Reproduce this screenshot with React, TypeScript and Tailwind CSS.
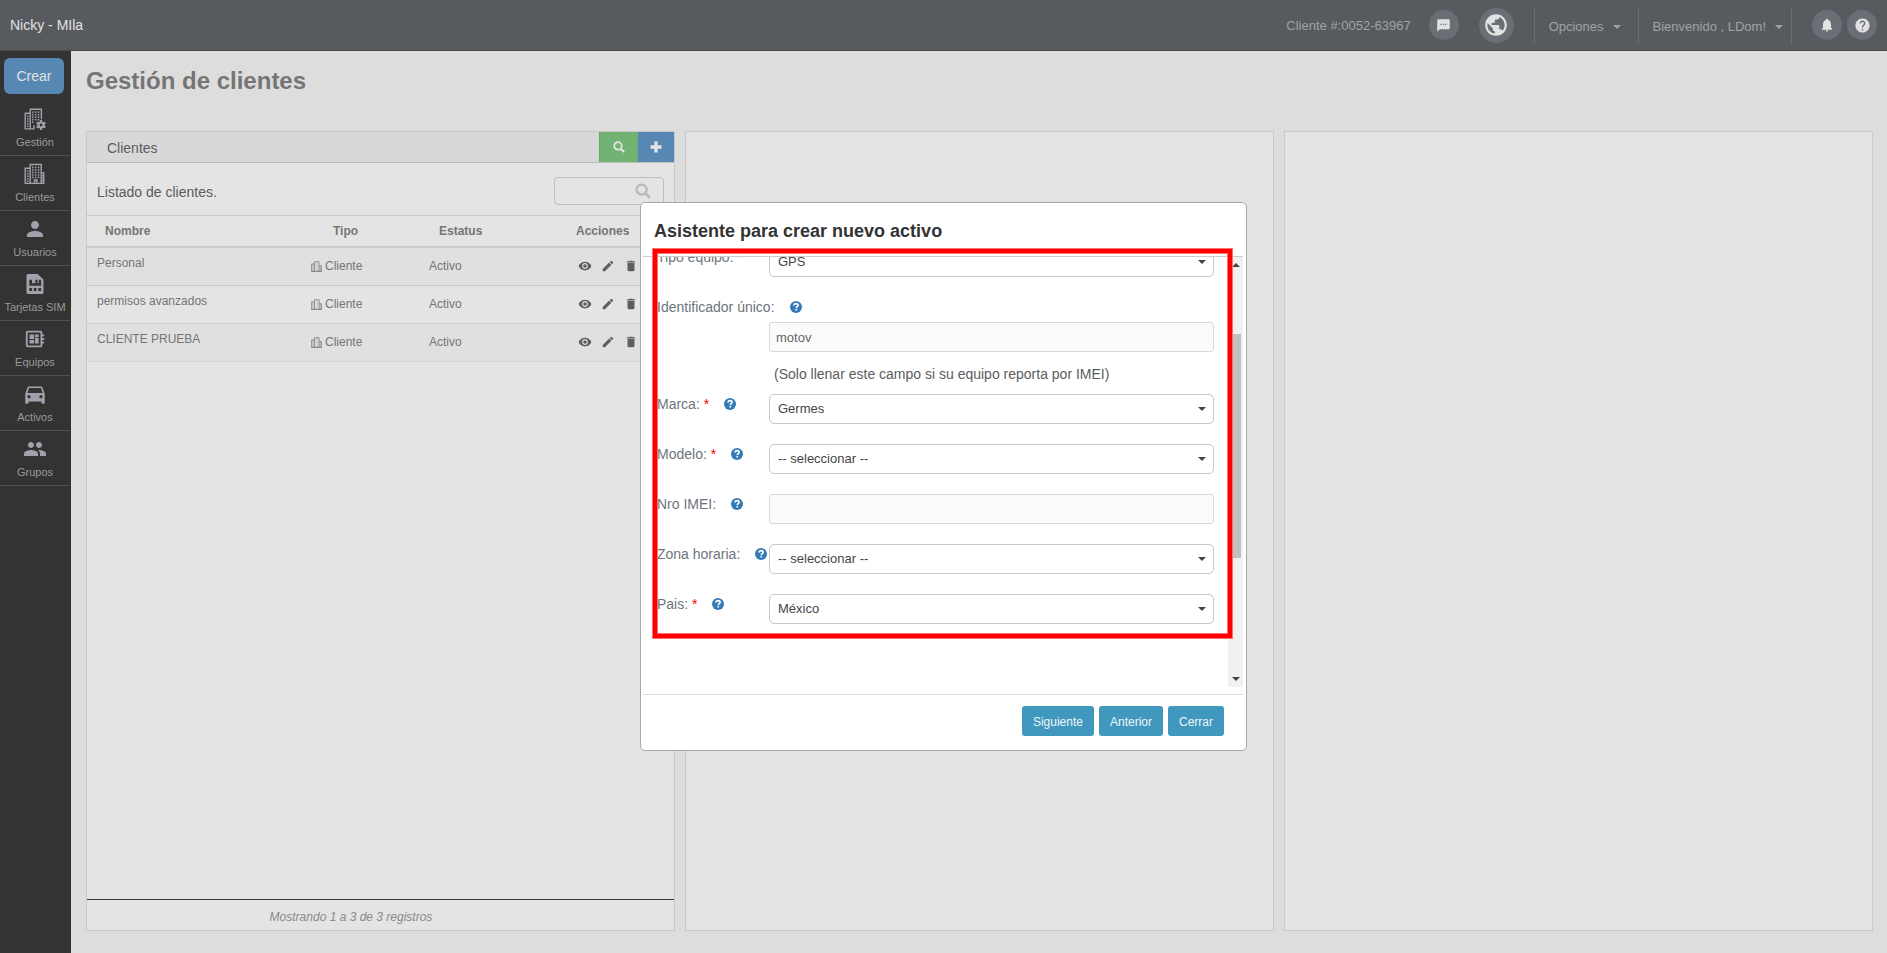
import type { ReactNode } from "react";
import {
  MdSms,
  MdPublic,
  MdNotifications,
  MdHelp,
  MdPerson,
  MdDeveloperBoard,
  MdDirectionsCar,
  MdGroup,
  MdVisibility,
  MdEdit,
  MdDelete,
} from "react-icons/md";

function Dots({ xs, ys }: { xs: number[]; ys: number[] }) {
  return (
    <>
      {xs.flatMap((x) =>
        ys.map((y) => <rect key={`${x}-${y}`} x={x} y={y} width="1.5" height="1.5" fill="currentColor" stroke="none" />),
      )}
    </>
  );
}

function BuildingIcon() {
  return (
    <svg viewBox="0 0 22 22" className="size-[22px]" fill="none" stroke="currentColor" strokeWidth="1.4">
      <path d="M6.2 20.4H1.2V5.2h5M6.2 20.4V1.5h11v18.9zM17.2 10h2.6v10.4h-2.6M10.5 20v-3h2.4v3" />
      <Dots xs={[3]} ys={[7.5, 10, 12.5, 15, 17.5]} />
      <Dots xs={[8, 10.9, 13.8]} ys={[3.7, 6.2, 8.7, 11.2, 13.7]} />
      <Dots xs={[17.8]} ys={[12, 14.5, 17]} />
    </svg>
  );
}

function BuildingGearIcon() {
  const teeth = [0, 60, 120, 180, 240, 300];
  return (
    <svg viewBox="0 0 22 22" className="size-[22px]" fill="none" stroke="currentColor" strokeWidth="1.4">
      <path d="M10.5 20.9H1.2V5.2h5M6.2 20.9V1.2h11.2v10M10 20.9v-3.6" />
      <Dots xs={[3]} ys={[7.5, 10, 12.5, 15, 17.5]} />
      <Dots xs={[8, 10.9, 13.8]} ys={[3.4, 5.9, 8.4, 10.9]} />
      <Dots xs={[8]} ys={[13.4]} />
      <circle cx="17" cy="17" r="2.5" strokeWidth="2.2" />
      {teeth.map((a) => (
        <path key={a} d="M17 13.9v-1.9" strokeWidth="2.2" transform={`rotate(${a} 17 17)`} />
      ))}
    </svg>
  );
}

function SmallBuildingIcon() {
  return (
    <svg viewBox="0 0 11 11" className="size-[11px]" fill="none" stroke="currentColor" strokeWidth="0.8" opacity="0.9">
      <path d="M3.5 10.400H.6V2.900h2.900M3.500 10.400V.7h4.600v9.700zM8.100 4.600h2.300v5.800H8.100" />
      <path d="M2 3v7.400M9.300 5v5.400" strokeWidth="1.200" opacity="0.45" />
      <path d="M5 1v9M6.600 1v9" strokeWidth="0.600" opacity="0.4" />
      <path d="M.2 10.400h10.600" />
    </svg>
  );
}

function SimIcon() {
  return (
    <svg viewBox="0 0 18 20" className="h-[20px] w-[18px]" fill="currentColor" fillRule="evenodd">
      <path d="M2 0h9.500L17.500 5.500V18.500a1.500 1.500 0 0 1-1.500 1.500H2A1.500 1.500 0 0 1 .5 18.500v-17A1.500 1.500 0 0 1 2 0zM3.300 5.800v6h11.800v-6h-2.300v3.400h-1.300V5.800H9.300v3.400H6V5.800zM3.300 14v3h2.700v-3zM7.700 14v3h2.700v-3zM12.300 14v3h2.800v-3z" />
    </svg>
  );
}

function SearchIcon({ className }: { className: string }) {
  return (
    <svg viewBox="0 0 16 16" className={className} fill="none" stroke="currentColor">
      <circle cx="6.600" cy="6.600" r="5" strokeWidth="2.400" />
      <path d="M10.300 10.300 14.800 14.800" strokeWidth="2.800" />
    </svg>
  );
}

function PlusIcon() {
  return (
    <svg viewBox="0 0 12 12" className="size-3" fill="currentColor">
      <path d="M4.300.5h3.400v3.800h3.800v3.400H7.700v3.800H4.300V7.700H.5V4.300h3.800z" />
    </svg>
  );
}

function QuestionIcon() {
  return (
    <svg viewBox="0 0 12 12" className="size-3 shrink-0" fill="none">
      <circle cx="6" cy="6" r="6" fill="#337ab7" />
      <path d="M4.100 4.600c0-1.300.8-2 2-2s2 .7 2 1.700c0 1.300-1.800 1.300-1.800 2.700" stroke="#fff" strokeWidth="1.700" />
      <path d="M5.400 7.900h1.700v1.600H5.400z" fill="#fff" />
    </svg>
  );
}

function Caret({ className }: { className: string }) {
  return (
    <svg viewBox="0 0 8 4" className={className} fill="currentColor">
      <path d="M0 0h8L4 4z" />
    </svg>
  );
}

const NAV: { label: string; icon: ReactNode }[] = [
  { label: "Gestión", icon: <BuildingGearIcon /> },
  { label: "Clientes", icon: <BuildingIcon /> },
  { label: "Usuarios", icon: <MdPerson className="size-6" /> },
  { label: "Tarjetas SIM", icon: <SimIcon /> },
  { label: "Equipos", icon: <MdDeveloperBoard className="size-[22px]" /> },
  { label: "Activos", icon: <MdDirectionsCar className="size-[26px]" /> },
  { label: "Grupos", icon: <MdGroup className="size-6" /> },
];

const CLIENTS = ["Personal", "permisos avanzados", "CLIENTE PRUEBA"];

function TopBar() {
  return (
    <header className="flex h-[51px] items-center justify-between border-b border-[#46494c] bg-[#575b5f] pr-[10px] pl-[10px] text-[#a0a2a4]">
      <span className="text-sm text-[#e2e2e2]">Nicky - MIla</span>
      <div className="flex items-center text-[13px]">
        <span className="mr-[18px] pt-px">Cliente #:0052-63967</span>
        <button aria-label="Mensajes" className="mr-5 flex size-[30px] items-center justify-center rounded-full bg-[#6a6f75] text-[#e2e2e2]">
          <MdSms className="size-[15px]" />
        </button>
        <button aria-label="Idioma" className="mr-5 flex size-[35px] items-center justify-center rounded-full bg-[#6a6f75] text-[#e2e2e2]">
          <MdPublic className="size-[26px]" />
        </button>
        <button className="flex h-[35px] items-center gap-[9px] border-l border-[#6c7074] pt-[3px] pr-[17px] pl-[14px]">
          Opciones <Caret className="h-1 w-2" />
        </button>
        <button className="mr-5 flex h-[35px] items-center gap-[9px] border-x border-[#6c7074] pt-[3px] pr-2 pl-[14px]">
          Bienvenido , LDom! <Caret className="h-1 w-2" />
        </button>
        <div className="flex gap-[5px] text-[#e2e2e2]">
          <button aria-label="Notificaciones" className="flex size-[30px] items-center justify-center rounded-full bg-[#6a6f75]">
            <MdNotifications className="size-4" />
          </button>
          <button aria-label="Ayuda" className="flex size-[30px] items-center justify-center rounded-full bg-[#6a6f75]">
            <MdHelp className="size-[17px]" />
          </button>
        </div>
      </div>
    </header>
  );
}

function Sidebar() {
  return (
    <nav className="w-[71px] shrink-0 bg-[#333] pt-[7px] pr-px text-[#a3a0ab]">
      <button className="mb-[7px] ml-1 h-9 w-[60px] rounded-md bg-[#5788b4] text-sm text-[#e0e0e0]">Crear</button>
      {NAV.map((item) => (
        <a key={item.label} href="#" className="flex h-[55px] flex-col items-center border-b border-[#495254] pt-[6px]">
          <span className="flex h-6 items-center">{item.icon}</span>
          <span className="mt-[3px] text-[11px] leading-4 whitespace-nowrap text-[#9a9a9a]">{item.label}</span>
        </a>
      ))}
    </nav>
  );
}

function ClientsPanel() {
  return (
    <section className="flex flex-col border border-[#c9c9c9] bg-[#e4e4e4]">
      <div className="flex h-[31px] border-b border-[#bdbdbd] bg-[#d8d8d8]">
        <h2 className="flex-1 pt-[6px] pl-5 text-sm leading-5 text-[#5c5c5c]">Clientes</h2>
        <button aria-label="Buscar" className="flex w-[39px] items-center justify-center border-l border-[#66a567] bg-[#72b273] text-[#e4e4e4]">
          <SearchIcon className="size-3" />
        </button>
        <button aria-label="Agregar" className="flex w-9 items-center justify-center bg-[#5788b4] text-[#e4e4e4]">
          <PlusIcon />
        </button>
      </div>
      <div className="flex h-[53px] items-center justify-between border-b border-[#c9c9c9] px-[10px] text-sm text-[#5c5c5c]">
        <label htmlFor="buscar-clientes" className="pt-[6px]">Listado de clientes.</label>
        <span className="relative mt-1">
          <input id="buscar-clientes" className="block h-7 w-[110px] rounded border border-[#bebebe] bg-transparent pr-7 pl-2" />
          <SearchIcon className="absolute top-[6px] right-[13px] size-4 text-[#bababa]" />
        </span>
      </div>
      <table className="w-full table-fixed border-collapse text-left text-xs text-[#757575]">
        <colgroup>
          <col className="w-[214px]" />
          <col className="w-[118px]" />
          <col className="w-[143px]" />
          <col />
        </colgroup>
        <thead>
          <tr className="h-[31px] border-b-2 border-[#cdcdcd]">
            <th className="pl-[18px]">Nombre</th>
            <th className="pl-8">Tipo</th>
            <th className="pl-5">Estatus</th>
            <th className="pl-[14px]">Acciones</th>
          </tr>
        </thead>
        <tbody>
          {CLIENTS.map((name) => (
            <tr key={name} className="h-[38px] border-b border-[#c9c9c9] odd:bg-[#e0e0e0] last:border-[#d8d8d8]">
              <td className="pt-[7px] pl-[10px] align-top">{name}</td>
              <td className="pl-[10px]">
                <span className="flex items-center gap-[3px]">
                  <SmallBuildingIcon /> Cliente
                </span>
              </td>
              <td className="pl-[10px]">Activo</td>
              <td className="pl-4">
                <span className="flex items-center gap-[9px] text-[#5e5e5e]">
                  <button aria-label={`Ver ${name}`}><MdVisibility className="size-[14px]" /></button>
                  <button aria-label={`Editar ${name}`}><MdEdit className="size-[14px]" /></button>
                  <button aria-label={`Eliminar ${name}`}><MdDelete className="size-[14px]" /></button>
                </span>
              </td>
            </tr>
          ))}
        </tbody>
      </table>
      <p className="mt-auto border-t border-[#333] pt-[9px] pr-[59px] pb-1 text-center text-xs leading-[17px] text-[#8a8a8a] italic">
        Mostrando 1 a 3 de 3 registros
      </p>
    </section>
  );
}

function FieldLabel({ id, text, required, help = true }: { id: string; text: string; required?: boolean; help?: boolean }) {
  return (
    <span className="flex h-5 w-28 shrink-0 items-center gap-[15px] text-sm leading-5 whitespace-nowrap text-[#6d747c]">
      <label htmlFor={id}>
        {text}
        {required && <span className="text-[#f00]"> *</span>}
      </label>
      {help && <QuestionIcon />}
    </span>
  );
}

function SelectField({ id, text, value, required, help }: { id: string; text: string; value: string; required?: boolean; help?: boolean }) {
  return (
    <div className="mb-5 flex">
      <FieldLabel id={id} text={text} required={required} help={help} />
      <span className="relative flex-1">
        <select id={id} className="block h-[30px] w-full appearance-none rounded-[5px] border border-[#c8c8c8] bg-white pl-2 text-[13px] text-[#444]">
          <option>{value}</option>
        </select>
        <Caret className="pointer-events-none absolute top-[13px] right-[8px] h-1 w-2 text-[#444]" />
      </span>
    </div>
  );
}

function AssetDialog() {
  return (
    <div className="fixed inset-0 flex items-center justify-center">
      <div role="dialog" aria-labelledby="dialog-title" className="relative w-[607px] rounded-[5px] border border-[#a8a8a8] bg-white pr-[3px] pl-[2px]">
        <h2 id="dialog-title" className="border-b border-[#ccc] pt-4 pb-[13px] pl-[11px] text-lg leading-6 font-bold text-[#333]">
          Asistente para crear nuevo activo
        </h2>
        <div className="mb-[7px] flex h-[430px]">
          <form className="-mt-[10px] min-w-0 flex-1 pr-[14px] pl-[14px] [clip-path:inset(10px_0_0_0)]">
            <SelectField id="tipo" text="Tipo equipo:" value="GPS" required help={false} />
            <FieldLabel id="identificador" text="Identificador único:" />
            <div className="mb-[10px] ml-28 pt-[5px]">
              <input id="identificador" defaultValue="motov" className="block h-[30px] w-full rounded-[3px] border border-[#dadada] bg-[#fbfbfb] px-[6px] text-[13px] text-[#666]" />
              <p className="mt-3 pl-[5px] text-sm leading-5 text-[#5c5c5c]">(Solo llenar este campo si su equipo reporta por IMEI)</p>
            </div>
            <SelectField id="marca" text="Marca:" value="Germes" required />
            <SelectField id="modelo" text="Modelo:" value="-- seleccionar --" required />
            <div className="mb-5 flex">
              <FieldLabel id="imei" text="Nro IMEI:" />
              <input id="imei" className="h-[30px] min-w-0 flex-1 rounded-[3px] border border-[#dadada] bg-[#fbfbfb] px-[6px] text-[13px] text-[#666]" />
            </div>
            <SelectField id="zona" text="Zona horaria:" value="-- seleccionar --" />
            <SelectField id="pais" text="Pais:" value="México" required />
          </form>
          <div className="flex w-[15px] flex-col items-center bg-[#f1f1f1] py-[6px] text-[#444]">
            <Caret className="h-1 w-2 rotate-180" />
            <div className="mt-[67px] h-[224px] w-[11px] bg-[#c1c1c1]" />
            <Caret className="mt-auto h-1 w-2" />
          </div>
        </div>
        <div className="flex justify-end gap-[5px] border-t border-[#dcdcdc] pt-[11px] pr-[19px] pb-[14px] text-xs text-[#eef6fa]">
          <button className="h-[30px] rounded-[3px] bg-[#4098be] px-[11px] pt-[2px]">Siguiente</button>
          <button className="h-[30px] rounded-[3px] bg-[#4098be] px-[11px] pt-[2px]">Anterior</button>
          <button className="h-[30px] rounded-[3px] bg-[#4098be] px-[11px] pt-[2px]">Cerrar</button>
        </div>
        <div className="pointer-events-none absolute top-[46px] right-[14px] bottom-[112px] left-[12px] border-4 border-[#f00] shadow-[0_0_0_1px_#ff7070] outline-1 -outline-offset-5 outline-[#ff7070]" />
      </div>
    </div>
  );
}

export default function App() {
  return (
    <div className="flex min-h-screen flex-col bg-[#ddd] font-['Liberation_Sans',Arial,sans-serif]">
      <TopBar />
      <div className="flex flex-1">
        <Sidebar />
        <main className="flex min-w-0 flex-1 flex-col pt-[14px] pr-[14px] pb-[22px] pl-[15px]">
          <h1 className="mb-[34px] text-2xl leading-8 font-bold text-[#757575]">Gestión de clientes</h1>
          <div className="grid flex-1 grid-cols-3 gap-[10px]">
            <ClientsPanel />
            <section className="border border-[#c9c9c9] bg-[#e4e4e4]" />
            <section className="border border-[#c9c9c9] bg-[#e4e4e4]" />
          </div>
        </main>
      </div>
      <AssetDialog />
    </div>
  );
}
